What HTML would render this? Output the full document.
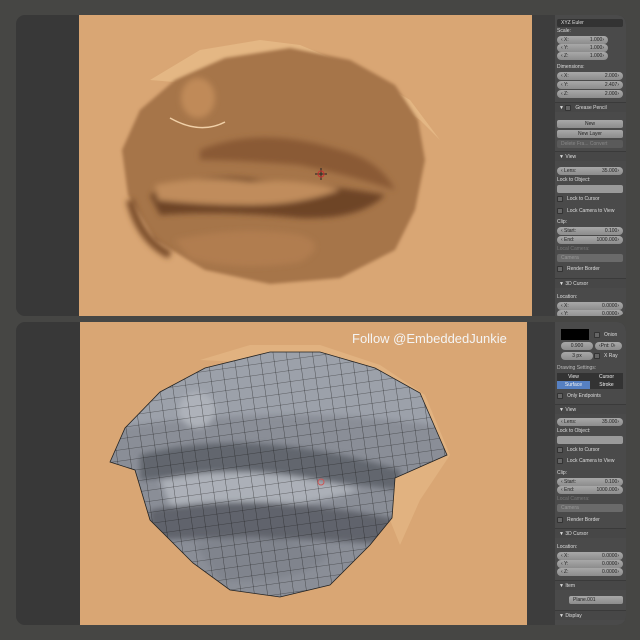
<!DOCTYPE html>
<html><head><meta charset="utf-8"><style>
*{margin:0;padding:0;box-sizing:border-box}
body{width:640px;height:640px;background:#464644;position:relative;overflow:hidden;font-family:"Liberation Sans",sans-serif}
.pan{position:absolute;left:16px;width:610px;background:#383838;border-radius:9px;overflow:hidden}
.peach{position:absolute;background:#d9a674}
.strip{position:absolute;background:#3d3d3d}
.props{position:absolute;background:#4a4a4a}
.r{position:absolute;left:2px;right:2px;font-size:5px;color:#ddd;line-height:8px;white-space:nowrap}
.f{position:absolute;left:2px;right:3px;height:8px;background:linear-gradient(#a8a8a8,#8c8c8c);border-radius:4px;font-size:5px;color:#222;line-height:8px;padding:0 4px;white-space:nowrap}
.f b{float:right;font-weight:normal}
.h{position:absolute;left:0;right:0;height:10px;border-top:1px solid #3a3a3a;background:#474747;font-size:5px;color:#ddd;line-height:10px;padding-left:4px}
.cb{display:inline-block;width:6px;height:6px;border:1px solid #333;background:#666;border-radius:1px;vertical-align:middle;margin-right:4px}
</style></head><body>

<div class="pan" style="top:15px;height:301px">
  <div class="peach" style="left:63px;top:0;width:453px;height:301px"></div>
  <div class="strip" style="left:516px;top:0;width:23px;height:301px"></div>
  <div class="props" style="left:539px;top:0;width:71px;height:301px">
    <div class="f" style="top:4px;background:#333;color:#ddd;border-radius:2px">XYZ Euler</div>
    <div class="r" style="top:12px">Scale:</div>
    <div class="f" style="top:21px;right:18px">‹ X:<b>1.000›</b></div>
    <div class="f" style="top:29px;right:18px">‹ Y:<b>1.000›</b></div>
    <div class="f" style="top:37px;right:18px">‹ Z:<b>1.000›</b></div>
    <div class="r" style="top:48px">Dimensions:</div>
    <div class="f" style="top:57px">‹ X:<b>2.000›</b></div>
    <div class="f" style="top:66px">‹ Y:<b>2.407›</b></div>
    <div class="f" style="top:75px">‹ Z:<b>2.000›</b></div>
    <div class="h" style="top:87px">▼ <span class="cb"></span>Grease Pencil</div>
    <div class="f" style="top:105px;border-radius:2px;text-align:center">New</div>
    <div class="f" style="top:115px;border-radius:2px;text-align:center">New Layer</div>
    <div class="f" style="top:125px;border-radius:2px;background:#5a5a5a;color:#888">Delete Fra... Convert</div>
    <div class="h" style="top:136px">▼ View</div>
    <div class="f" style="top:152px">‹ Lens:<b>35.000›</b></div>
    <div class="r" style="top:161px">Lock to Object:</div>
    <div class="f" style="top:170px;border-radius:2px;background:#9a9a9a"></div>
    <div class="r" style="top:180px"><span class="cb"></span>Lock to Cursor</div>
    <div class="r" style="top:192px"><span class="cb"></span>Lock Camera to View</div>
    <div class="r" style="top:203px">Clip:</div>
    <div class="f" style="top:212px">‹ Start:<b>0.100›</b></div>
    <div class="f" style="top:221px">‹ End:<b>1000.000›</b></div>
    <div class="r" style="top:230px;color:#777">Local Camera:</div>
    <div class="f" style="top:239px;border-radius:2px;background:#6a6a6a;color:#999">Camera</div>
    <div class="r" style="top:250px"><span class="cb"></span>Render Border</div>
    <div class="h" style="top:263px">▼ 3D Cursor</div>
    <div class="r" style="top:278px">Location:</div>
    <div class="f" style="top:287px">‹ X:<b>0.0000›</b></div>
    <div class="f" style="top:295px">‹ Y:<b>0.0000›</b></div>
  </div>
  <svg style="position:absolute;left:0;top:0" width="610" height="301" viewBox="16 15 610 301">
    <defs><filter id="b"><feGaussianBlur stdDeviation="3"/></filter><filter id="b2"><feGaussianBlur stdDeviation="1.5"/></filter></defs>
    <path d="M150,80 L200,50 L260,40 L300,45 L360,70 L410,100 L440,140 L420,120 L390,100 Z" fill="#ebc390" opacity=".6"/>
    <g filter="url(#b2)">
    <path d="M122,150 L140,110 L175,80 L225,58 L290,48 L350,60 L395,85 L418,120 L425,160 L415,210 L395,250 L340,278 L270,284 L205,270 L155,240 L128,195 Z" fill="#a6754a"/>
    </g>
    <g filter="url(#b)">
    <path d="M200,150 Q260,125 340,150 Q380,160 395,190 Q350,175 300,165 Q240,160 200,160 Z" fill="#8a5a36"/>
    <path d="M150,195 Q200,170 260,180 Q330,185 385,195 Q360,220 300,218 Q220,210 160,215 Z" fill="#6e4428"/>
    <path d="M155,185 Q200,175 250,182 Q300,178 340,190 Q300,205 250,205 Q200,205 158,200 Z" fill="#c08c5c"/>
    <path d="M175,240 Q240,225 300,235 Q330,245 300,262 Q240,272 190,258 Z" fill="#b17d50"/>
    <ellipse cx="198" cy="98" rx="17" ry="20" fill="#c08a58"/>
    <path d="M130,200 Q140,240 170,255" stroke="#7a4d2c" stroke-width="8" fill="none"/>
    </g>
    <path d="M170,118 Q200,135 225,122" stroke="#f0d0a8" stroke-width="1.5" fill="none"/>
    <g stroke="#222" stroke-width="1"><line x1="321" y1="168" x2="321" y2="180"/><line x1="315" y1="174" x2="327" y2="174"/></g>
    <circle cx="321" cy="174" r="3" fill="none" stroke="#c33" stroke-width="1"/>
  </svg>
</div>

<div class="pan" style="top:322px;height:303px">
  <div class="peach" style="left:64px;top:0;width:447px;height:303px"></div>
  <div class="strip" style="left:511px;top:0;width:28px;height:303px"></div>
  <div class="props" style="left:539px;top:0;width:71px;height:303px">
    <div style="position:absolute;left:6px;top:7px;width:28px;height:11px;background:#000"></div>
    <div class="r" style="left:39px;top:9px"><span class="cb"></span>Onion</div>
    <div class="f" style="top:20px;left:6px;right:33px;text-align:center">0.900</div>
    <div class="f" style="top:20px;left:40px;right:4px">‹Pnt: 0›</div>
    <div class="f" style="top:30px;left:6px;right:33px;text-align:center">3 px</div>
    <div class="r" style="left:39px;top:30px"><span class="cb"></span>X Ray</div>
    <div class="r" style="top:42px;color:#bbb">Drawing Settings:</div>
    <div style="position:absolute;left:2px;top:51px;width:33px;height:8px;background:#333;color:#eee;font-size:5px;text-align:center;line-height:8px">View</div>
    <div style="position:absolute;left:35px;top:51px;width:33px;height:8px;background:#333;color:#eee;font-size:5px;text-align:center;line-height:8px">Cursor</div>
    <div style="position:absolute;left:2px;top:59px;width:33px;height:8px;background:#5680c2;color:#eee;font-size:5px;text-align:center;line-height:8px">Surface</div>
    <div style="position:absolute;left:35px;top:59px;width:33px;height:8px;background:#333;color:#eee;font-size:5px;text-align:center;line-height:8px">Stroke</div>
    <div class="r" style="top:70px"><span class="cb"></span>Only Endpoints</div>
    <div class="h" style="top:82px">▼ View</div>
    <div class="f" style="top:96px">‹ Lens:<b>35.000›</b></div>
    <div class="r" style="top:105px">Lock to Object:</div>
    <div class="f" style="top:114px;border-radius:2px;background:#9a9a9a"></div>
    <div class="r" style="top:124px"><span class="cb"></span>Lock to Cursor</div>
    <div class="r" style="top:135px"><span class="cb"></span>Lock Camera to View</div>
    <div class="r" style="top:147px">Clip:</div>
    <div class="f" style="top:156px">‹ Start:<b>0.100›</b></div>
    <div class="f" style="top:164px">‹ End:<b>1000.000›</b></div>
    <div class="r" style="top:173px;color:#777">Local Camera:</div>
    <div class="f" style="top:182px;border-radius:2px;background:#6a6a6a;color:#999">Camera</div>
    <div class="r" style="top:194px"><span class="cb"></span>Render Border</div>
    <div class="h" style="top:206px">▼ 3D Cursor</div>
    <div class="r" style="top:221px">Location:</div>
    <div class="f" style="top:230px">‹ X:<b>0.0000›</b></div>
    <div class="f" style="top:238px">‹ Y:<b>0.0000›</b></div>
    <div class="f" style="top:246px">‹ Z:<b>0.0000›</b></div>
    <div class="h" style="top:258px">▼ Item</div>
    <div class="f" style="top:274px;left:14px;border-radius:2px">Plane.001</div>
    <div class="h" style="top:288px">▼ Display</div>
  </div>
  <svg style="position:absolute;left:0;top:0" width="610" height="303" viewBox="16 322 610 303">
    <defs>
      <clipPath id="m"><path d="M110,462 L125,428 L160,392 L205,368 L270,352 L320,352 L375,368 L420,393 L447,455 L395,478 L392,518 L370,545 L330,585 L280,597 L230,590 L193,563 L150,520 L135,470 Z"/></clipPath>
      <pattern id="g" width="13" height="11" patternUnits="userSpaceOnUse" patternTransform="rotate(-8)">
        <path d="M0,0 H13 M0,0 V11" stroke="#1c1c1c" stroke-width="0.6" fill="none"/>
      </pattern>
      <filter id="bb"><feGaussianBlur stdDeviation="3"/></filter>
    </defs>
    <path d="M200,360 L250,345 L320,345 L380,365 L425,395 L450,455 L420,500 L400,545 L390,520 L395,478 L447,455 L420,393 L375,368 Z" fill="#e6bb88" opacity=".6"/>
    <g clip-path="url(#m)">
      <rect x="100" y="340" width="360" height="270" fill="#8a8e97"/>
      <g filter="url(#bb)">
      <path d="M100,340 H460 V430 Q300,400 100,430 Z" fill="#9ca1aa"/>
      <path d="M140,455 Q250,425 400,470 L400,490 Q250,470 140,480 Z" fill="#62666e"/>
      <path d="M160,480 Q250,460 360,490 Q280,515 170,505 Z" fill="#acb0b8"/>
      <path d="M150,510 Q260,490 400,520 L400,545 Q260,535 150,540 Z" fill="#60646c"/>
      <path d="M195,545 Q260,525 330,555 Q300,585 220,580 Z" fill="#80848d"/>
      <circle cx="197" cy="410" r="18" fill="#aeb2ba"/>
      </g>
      <rect x="100" y="340" width="360" height="270" fill="url(#g)"/>
    </g>
    <path d="M110,462 L125,428 L160,392 L205,368 L270,352 L320,352 L375,368 L420,393 L447,455 L395,478 L392,518 L370,545 L330,585 L280,597 L230,590 L193,563 L150,520 L135,470 Z" fill="none" stroke="#222" stroke-width="0.8"/>
    <circle cx="321" cy="482" r="3" fill="none" stroke="#c55" stroke-width="1"/>
    <text x="352" y="343" font-family="Liberation Sans, sans-serif" font-size="13" fill="#f4f4f4">Follow @EmbeddedJunkie</text>
  </svg>
</div>
</body></html>
